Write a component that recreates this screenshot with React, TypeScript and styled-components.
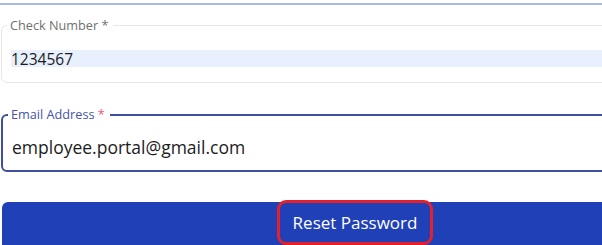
import { FC } from "react";
import styled, { createGlobalStyle } from "styled-components";

const GlobalStyle = createGlobalStyle`
  html, body {
    margin: 0;
    padding: 0;
    background: #ffffff;
    overflow: hidden;
  }
  body {
    font-family: "Open Sans", "Noto Sans", sans-serif;
  }
`;

const Form = styled.form`
  width: 712px;
  display: flex;
  flex-direction: column;
`;

const PrevFieldEdge = styled.div`
  height: 3px;
  border-bottom: 2px solid #a9bbe6;
  margin-bottom: 13px;
`;

const Field = styled.fieldset<{ focused?: boolean }>`
  margin: 0 0 0 1px;
  padding: 0 0 0 9px;
  border: ${({ focused }) =>
    focused ? "2px solid #3f4f9c" : "1px solid #e6e6e6"};
  border-radius: 6px;
  height: 65px;
  box-sizing: border-box;
`;

const Legend = styled.legend<{ focused?: boolean }>`
  padding: 0 5px 0 3px;
  margin-left: -4px;
  font-size: 12.7px;
  line-height: 15px;
  color: ${({ focused }) => (focused ? "#4555a8" : "#6f6f6f")};
`;

const Star = styled.span<{ focused?: boolean }>`
  color: ${({ focused }) => (focused ? "#e5577a" : "#6f6f6f")};
`;

const Input = styled.input<{ autofilled?: boolean }>`
  display: block;
  width: 100%;
  box-sizing: border-box;
  border: none;
  outline: none;
  padding: 0;
  font-family: inherit;
  color: #1c1c1c;
  background: ${({ autofilled }) => (autofilled ? "#e8f0fe" : "transparent")};
`;

const CheckInput = styled(Input)`
  margin-top: 17px;
  height: 17px;
  font-size: 15.5px;
`;

const EmailInput = styled(Input)`
  margin-top: 14px;
  height: 22px;
  font-size: 17.5px;
`;

const Gap = styled.div<{ h: number }>`
  height: ${({ h }) => h}px;
`;

const Button = styled.button`
  margin-left: 2px;
  width: 706px;
  height: 45px;
  border: none;
  border-radius: 6px 6px 0 0;
  background: #1f40b6;
  display: flex;
  justify-content: center;
  align-items: flex-start;
  padding: 0;
  font-family: inherit;
  cursor: pointer;
`;

const Highlight = styled.span`
  margin-top: -2px;
  height: 45px;
  width: 156px;
  box-sizing: border-box;
  border: 3px solid #e3202c;
  border-radius: 9px;
  display: flex;
  align-items: center;
  justify-content: center;
  color: #ffffff;
  font-size: 17px;
`;

const App: FC = () => {
  return (
    <>
      <GlobalStyle />
      <Form onSubmit={(e) => e.preventDefault()}>
        <PrevFieldEdge />
        <Field>
          <Legend>
            Check Number <Star>*</Star>
          </Legend>
          <CheckInput autofilled defaultValue="1234567" />
        </Field>
        <Gap h={24} />
        <Field focused>
          <Legend focused>
            Email Address <Star focused>*</Star>
          </Legend>
          <EmailInput defaultValue="employee.portal@gmail.com" />
        </Field>
        <Gap h={30} />
        <Button type="submit">
          <Highlight>Reset Password</Highlight>
        </Button>
      </Form>
    </>
  );
};

export default App;
